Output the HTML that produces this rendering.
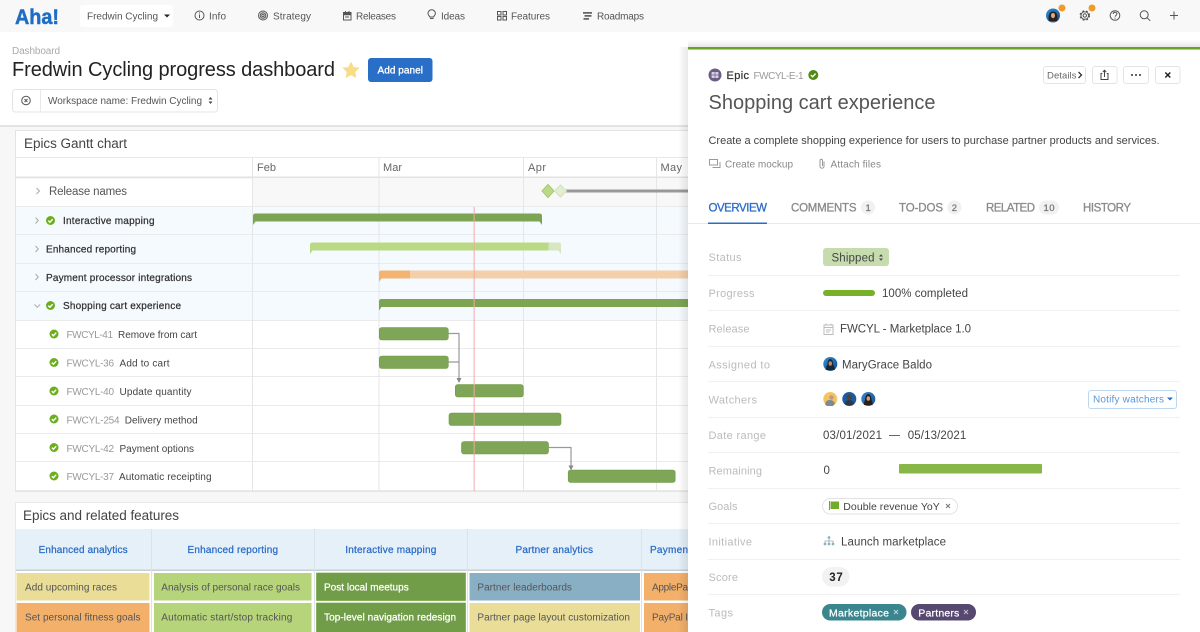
<!DOCTYPE html>
<html lang="en"><head><meta charset="utf-8"><title>Fredwin Cycling progress dashboard</title>
<style>
html,body{margin:0;padding:0;width:1200px;height:632px;overflow:hidden;background:#fff}
svg{display:block;filter:blur(.3px)}
text{font-family:"Liberation Sans",sans-serif}
.nav{font-size:10px;fill:#555}
.lab{font-size:11px;fill:#bbb}
.val{font-size:11.5px;fill:#444}
.bold{font-size:10px;fill:#333;stroke:#333;stroke-width:.25}
.id{font-size:10px;fill:#999}
.it{font-size:10px;fill:#444}
.mon{font-size:11px;fill:#666}
.tab{font-size:11.5px;fill:#8a8a8a;stroke:#8a8a8a;stroke-width:.3}
.hd{font-size:10px;fill:#2a6cc7;stroke:#2a6cc7;stroke-width:.25}
.card{font-size:10px;fill:#555}
.wt{font-size:10px;fill:#fff;stroke:#fff;stroke-width:.25}
.tag{font-size:10.5px;fill:#fff;stroke:#fff;stroke-width:.25}
.ic{fill:none;stroke:#555;stroke-width:1}
.sep{stroke:#f1f1f1;stroke-width:1}
.gl{stroke:#ebebeb;stroke-width:1}
.mg{stroke:#e4e6e8;stroke-width:1}
.ch{fill:none;stroke:#aaa;stroke-width:1}
.bar{fill:#7fa556;stroke:#6f9b45;stroke-width:.6}
.w{fill:none;stroke:#fff;stroke-width:1.4}
</style></head><body>
<svg width="1200" height="632" viewBox="0 0 1200 632" xmlns="http://www.w3.org/2000/svg">
<defs>
<linearGradient id="ps" x1="0" x2="1" y1="0" y2="0"><stop offset="0" stop-color="#000" stop-opacity="0"/><stop offset="1" stop-color="#000" stop-opacity=".09"/></linearGradient>
<linearGradient id="pt" x1="0" x2="0" y1="0" y2="1"><stop offset="0" stop-color="#000" stop-opacity="0"/><stop offset="1" stop-color="#000" stop-opacity=".1"/></linearGradient>
<linearGradient id="av" x1="0" x2="1" y1="0" y2="1"><stop offset="0" stop-color="#2f8bd6"/><stop offset="1" stop-color="#14508f"/></linearGradient>
<g id="ck"><circle r="4.5" fill="#6cae1d"/><path d="M-2.2 .1 L-.6 1.7 L2.2 -1.3" class="w"/></g>
</defs>

<!-- page backgrounds -->
<rect width="1200" height="632" fill="#f7f7f7"/>
<rect y="32" width="1200" height="93" fill="#fff"/>
<rect y="125" width="1200" height="2" fill="#e4e4e4"/>

<!-- nav -->
<rect width="1200" height="32" fill="#f8f8f8"/>
<text x="15" y="24" font-size="21" font-weight="bold" fill="#1f6dc4" stroke="#1f6dc4" stroke-width=".5" textLength="44" lengthAdjust="spacingAndGlyphs">Aha!</text>
<rect x="80" y="5" width="93" height="22" rx="3" fill="#fff"/>
<text x="87" y="19.5" class="nav" textLength="71">Fredwin Cycling</text>
<path d="M164 14.5h6l-3 3z" fill="#222"/>
<circle cx="199.500" cy="15.500" r="4.500" class="ic"/><path d="M199.500 14.500v3.500M199.500 12.500v1" class="ic"/>
<text x="209" y="19.500" class="nav" textLength="17">Info</text>
<circle cx="263" cy="15.500" r="4.500" class="ic"/><circle cx="263" cy="15.500" r="2.800" class="ic"/><circle cx="263" cy="15.500" r="1.200" class="ic"/>
<text x="273" y="19.500" class="nav" textLength="38">Strategy</text>
<path d="M343.500 12.500h7.500v7.500h-7.500zM343.500 14.800h7.500M345.500 11v2M349 11v2M345 17h4" class="ic"/><rect x="343.500" y="12" width="7.500" height="2.500" fill="#555"/>
<text x="356" y="19.500" class="nav" textLength="40">Releases</text>
<path d="M430 18.500h3.500M429.800 17c-.3-1.300-1.800-1.800-1.800-3.500a3.700 3.700 0 0 1 7.400 0c0 1.700-1.500 2.200-1.800 3.500z" class="ic"/>
<text x="441" y="19.500" class="nav" textLength="24">Ideas</text>
<path d="M497.500 11.500h3.500v3.500h-3.500zM503 11.500h3.500v3.500h-3.500zM497.500 16.500h3.500v3.500h-3.500zM503 16.500h3.500v3.500h-3.500z" class="ic"/>
<text x="511" y="19.500" class="nav" textLength="39">Features</text>
<path d="M583 12h9v1.800h-9zM584.500 15h7v1.800h-7zM583.500 18h5.500v1.800h-5.500z" fill="#666"/>
<text x="597" y="19.500" class="nav" textLength="47">Roadmaps</text>

<circle cx="1053" cy="15.500" r="7" fill="url(#av)"/><path d="M1048.800 21c-.6-4-.4-9.500 4.200-9.500s4.800 5.500 4.200 9.500z" fill="#2a211d"/><ellipse cx="1053" cy="15.500" rx="2" ry="2.600" fill="#d9a98a"/>
<circle cx="1062" cy="8" r="3.500" fill="#f09a28"/>
<circle cx="1084.800" cy="15.500" r="1.700" class="ic"/><circle cx="1084.800" cy="15.500" r="3.800" class="ic"/><circle cx="1084.800" cy="15.500" r="4.600" fill="none" stroke="#555" stroke-width="1.300" stroke-dasharray="1.800 2"/>
<circle cx="1092" cy="8" r="3.500" fill="#f09a28"/>
<circle cx="1115" cy="15.500" r="4.800" class="ic"/><path d="M1113.200 14c.2-2.300 3.700-2.200 3.700 0 0 1.400-1.800 1.300-1.800 2.700M1115 17.700v1" class="ic"/>
<circle cx="1144.200" cy="14.800" r="4" class="ic"/><path d="M1147.200 17.800l3 3" class="ic"/>
<path d="M1174 11.500v8M1170 15.500h8" class="ic"/>

<!-- dashboard header -->
<text x="12" y="54" font-size="10" fill="#aaa" textLength="48">Dashboard</text>
<text x="12" y="76" font-size="20" fill="#222" textLength="323">Fredwin Cycling progress dashboard</text>
<path d="M351 61.500l2.700 5.500 6 .8-4.400 4.200 1.100 6-5.400-2.900-5.400 2.900 1.100-6-4.400-4.200 6-.8z" fill="#f9dd86"/>
<rect x="368" y="58" width="64.500" height="24" rx="3" fill="#2a6fc7"/>
<text x="377.500" y="73.500" font-size="10" fill="#fff" stroke="#fff" stroke-width=".3" textLength="45.500">Add panel</text>
<rect x="12.500" y="89.500" width="205" height="22.500" rx="3" fill="#fff" stroke="#e4e4e4"/>
<path d="M40.500 90v22" stroke="#e8e8e8"/>
<circle cx="26" cy="100.500" r="4.300" class="ic"/><path d="M24.500 99l3 3M27.500 99l-3 3" class="ic"/>
<text x="48" y="104" class="nav" textLength="154">Workspace name: Fredwin Cycling</text>
<path d="M208.500 99.500l2-2.500 2 2.500zM208.500 101.500l2 2.500 2-2.500z" fill="#444"/>

<!-- Gantt panel -->
<rect x="15.500" y="130.500" width="680" height="361" fill="#fff" stroke="#e4e4e4"/>
<text x="24" y="148" font-size="13.5" fill="#444" textLength="103">Epics Gantt chart</text>
<path d="M16 157.500h672" stroke="#e8e8e8"/>
<rect x="16" y="176.500" width="672" height="1.800" fill="#e2e2e2"/>
<rect x="253" y="178" width="435" height="28" fill="#f8f8f8"/>
<rect x="16" y="207" width="672" height="113" fill="#f5faff"/>
<path class="gl" d="M16 206.500h672M16 234.500h672M16 263.500h672M16 291.500h672M16 320.500h672M16 348.500h672M16 376.500h672M16 405.500h672M16 433.500h672M16 461.500h672M16 490.500h672"/>
<path class="mg" d="M252.500 157v334M379 157v334M523.500 157v334M656.500 157v334"/>
<text x="257" y="171" class="mon" textLength="19">Feb</text>
<text x="383" y="171" class="mon" textLength="19">Mar</text>
<text x="528" y="171" class="mon" textLength="18">Apr</text>
<text x="660.500" y="171" class="mon" textLength="21.500">May</text>

<path class="ch" d="M36.500 188l3 3-3 3"/>
<text x="49" y="195" font-size="11.500" fill="#555" textLength="78">Release names</text>
<path class="ch" d="M35.500 217.500l2.800 3-2.800 3"/>
<use href="#ck" x="50.500" y="220.500"/>
<text x="63" y="224" class="bold" textLength="91.500">Interactive mapping</text>
<path class="ch" d="M35.500 246l2.800 3-2.800 3"/>
<text x="46" y="252.500" class="bold" textLength="90">Enhanced reporting</text>
<path class="ch" d="M35.500 274l2.800 3-2.800 3"/>
<text x="46" y="281" class="bold" textLength="146">Payment processor integrations</text>
<path class="ch" d="M34.500 304.500l2.800 2.800 2.800-2.800"/>
<use href="#ck" x="50.500" y="305.500"/>
<text x="63" y="309" class="bold" textLength="118">Shopping cart experience</text>

<use href="#ck" x="54" y="334"/><text x="66.500" y="338" class="id" textLength="46.500">FWCYL-41</text><text x="118" y="338" class="it" textLength="79">Remove from cart</text>
<use href="#ck" x="54" y="362.500"/><text x="66.500" y="366.500" class="id" textLength="47.500">FWCYL-36</text><text x="119.500" y="366.500" class="it" textLength="50">Add to cart</text>
<use href="#ck" x="54" y="391"/><text x="66.500" y="395" class="id" textLength="47.500">FWCYL-40</text><text x="119.500" y="395" class="it" textLength="72">Update quantity</text>
<use href="#ck" x="54" y="419"/><text x="66.500" y="423.500" class="id" textLength="53">FWCYL-254</text><text x="124.700" y="423.500" class="it" textLength="73">Delivery method</text>
<use href="#ck" x="54" y="447.500"/><text x="66.500" y="452" class="id" textLength="47.500">FWCYL-42</text><text x="119.500" y="452" class="it" textLength="74.500">Payment options</text>
<use href="#ck" x="54" y="476"/><text x="66.500" y="480" class="id" textLength="47.500">FWCYL-37</text><text x="119" y="480" class="it" textLength="92.500">Automatic receipting</text>

<!-- milestones -->
<path d="M566 191h122" stroke="#999" stroke-width="3"/>
<path d="M548 184.500l6 6.500-6 6.500-6-6.500z" fill="#bcd98b" stroke="#a5c96c"/>
<path d="M560.500 185l6 6-6 6-6-6z" fill="#e3edd3" stroke="#d3e2bd"/>

<!-- summary bars -->
<path d="M253 225v-9q0-2.500 2.500-2.500h284q2.500 0 2.500 2.500v9l-2.500-3.500h-284z" fill="#7da453"/>
<path d="M310 254v-9q0-2.500 2.500-2.500h246q2.500 0 2.500 2.500v9l-2.500-3.500h-246z" fill="#bad985"/>
<path d="M548.500 242.500h10q2.500 0 2.500 2.500v9l-2.500-3.500h-10z" fill="#d8e6c2"/>
<path d="M379 282v-9q0-2.500 2.500-2.500h306.500v8h-306.500z" fill="#f4cfa9"/>
<path d="M379 282v-9q0-2.500 2.500-2.500h28.500v8h-28.500z" fill="#f4b471"/>
<path d="M379 310.500v-9q0-2.500 2.500-2.500h306.500v8h-306.500z" fill="#7da453"/>
<!-- child bars -->
<rect class="bar" x="379.300" y="327.500" width="69" height="12.500" rx="2.500"/>
<rect class="bar" x="379.300" y="356" width="69" height="12.500" rx="2.500"/>
<rect class="bar" x="455.300" y="384.500" width="68" height="12.500" rx="2.500"/>
<rect class="bar" x="449" y="413" width="112" height="12.500" rx="2.500"/>
<rect class="bar" x="461.500" y="441.500" width="87" height="12.500" rx="2.500"/>
<rect class="bar" x="568.200" y="470" width="107" height="12.500" rx="2.500"/>
<!-- dependency -->
<path d="M448.500 333.500h10.500v45M448.500 362h10.500M548.500 447.500h22.500v19" fill="none" stroke="#999" stroke-width="1.200"/>
<path d="M456.500 378h5l-2.500 5zM568.500 465.500h5l-2.500 5z" fill="#888"/>
<!-- today -->
<rect x="473.500" y="207" width="1.400" height="284" fill="#f4a8a8" opacity=".7"/>

<!-- Features panel -->
<rect x="15.500" y="502.500" width="680" height="135" fill="#fff" stroke="#e8e8e8"/>
<text x="23" y="520" font-size="13.5" fill="#444" textLength="156">Epics and related features</text>
<rect x="16" y="529" width="672" height="41" fill="#e6f0f9"/>
<rect x="16" y="569.500" width="672" height="1.500" fill="#c9ced3"/>
<path d="M151.500 529v103M314.500 529v103M467.500 529v103M641.500 529v103" stroke="#dbe3ea"/>
<text x="38.600" y="553" class="hd" textLength="89">Enhanced analytics</text>
<text x="187.500" y="553" class="hd" textLength="90.500">Enhanced reporting</text>
<text x="345.300" y="553" class="hd" textLength="91">Interactive mapping</text>
<text x="515.500" y="553" class="hd" textLength="77.500">Partner analytics</text>
<text x="650" y="553" class="hd" textLength="38">Paymen</text>
<rect x="16.500" y="573" width="133" height="27.500" fill="#e9dd98"/>
<rect x="154" y="573" width="157.500" height="27.500" fill="#b6d57a"/>
<rect x="316.500" y="573" width="149" height="27.500" fill="#729d48" stroke="#64a030" stroke-width=".6"/>
<rect x="469.500" y="573" width="170.500" height="27.500" fill="#88afc4"/>
<rect x="644" y="573" width="44" height="27.500" fill="#f2b06b"/>
<rect x="16.500" y="603" width="133" height="29" fill="#f2b06b"/>
<rect x="154" y="603" width="157.500" height="29" fill="#b6d57a"/>
<rect x="316.500" y="603" width="149" height="29" fill="#729d48" stroke="#64a030" stroke-width=".6"/>
<rect x="469.500" y="603" width="170.500" height="29" fill="#e9dd98"/>
<rect x="644" y="603" width="44" height="29" fill="#f2b06b"/>
<text x="25" y="590.500" class="card" textLength="92">Add upcoming races</text>
<text x="25" y="620.500" class="card" textLength="115.500">Set personal fitness goals</text>
<text x="161.300" y="590.500" class="card" textLength="138.700">Analysis of personal race goals</text>
<text x="161.300" y="620.500" class="card" textLength="131">Automatic start/stop tracking</text>
<text x="324" y="590.500" class="wt" textLength="84.700">Post local meetups</text>
<text x="324" y="620.500" class="wt" textLength="132">Top-level navigation redesign</text>
<text x="477.400" y="590.500" class="card" textLength="94.500">Partner leaderboards</text>
<text x="477.400" y="620.500" class="card" textLength="152.500">Partner page layout customization</text>
<text x="652" y="590.500" class="card" textLength="36">ApplePa</text>
<text x="652" y="620.500" class="card" textLength="36">PayPal I</text>

<!-- Drawer -->
<rect x="678" y="47" width="10" height="585" fill="url(#ps)"/>
<rect x="688" y="40" width="512" height="7" fill="url(#pt)"/>
<rect x="688" y="47" width="512" height="585" fill="#fff"/>
<rect x="688" y="47" width="512" height="2.500" fill="#68a31f"/>

<circle cx="715" cy="75" r="6.500" fill="#6d5e88"/><rect x="711.500" y="72" width="7" height="6" rx="1" fill="#d9d3e3"/><path d="M715 72v6M711.500 75h7" stroke="#6d5e88" stroke-width=".7"/>
<text x="726.500" y="79" font-size="11" fill="#333" stroke="#333" stroke-width=".25" textLength="22.500">Epic</text>
<text x="753.500" y="79" class="id" textLength="50">FWCYL-E-1</text>
<circle cx="813.300" cy="75" r="5" fill="#4f8a12"/><path d="M810.800 75l1.800 1.800 3-3.200" class="w"/>
<rect x="1043.500" y="66.500" width="42" height="17" rx="2.500" fill="#fff" stroke="#e4e4e4"/>
<text x="1047" y="78.500" font-size="9.500" fill="#666" textLength="29.500">Details</text>
<path d="M1078.500 72l3 3-3 3" fill="none" stroke="#333" stroke-width="1.300"/>
<rect x="1092.500" y="66.500" width="24.500" height="17" rx="2.500" fill="#fff" stroke="#e4e4e4"/>
<path d="M1102.300 73.500h-1.300v6h7v-6h-1.300M1104.500 77v-6.500M1102.800 72l1.700-1.800 1.700 1.800" class="ic" style="stroke:#444"/>
<rect x="1123.500" y="66.500" width="25" height="17" rx="2.500" fill="#fff" stroke="#e4e4e4"/>
<circle cx="1132" cy="75" r="1" fill="#333"/><circle cx="1136" cy="75" r="1" fill="#333"/><circle cx="1140" cy="75" r="1" fill="#333"/>
<rect x="1155.500" y="66.500" width="24.500" height="17" rx="2.500" fill="#fff" stroke="#e4e4e4"/>
<path d="M1165.300 72.500l5 5M1170.300 72.500l-5 5" stroke="#222" stroke-width="1.500"/>

<text x="708.500" y="109" font-size="20" fill="#555" textLength="227">Shopping cart experience</text>
<text x="708.500" y="144" font-size="11" fill="#444" textLength="451">Create a complete shopping experience for users to purchase partner products and services.</text>
<path d="M709.500 159.500h8v5.500h-8zM712.500 167.500h7.500v-5.500" fill="none" stroke="#999"/>
<text x="725" y="167.500" font-size="10" fill="#888" textLength="68">Create mockup</text>
<path d="M824 161.500v4.700a2 2 0 0 1-4 0v-5.700a1.200 1.200 0 0 1 2.500 0v5.500" fill="none" stroke="#999"/>
<text x="830.500" y="167.500" font-size="10" fill="#888" textLength="50.500">Attach files</text>

<text x="708.500" y="211.500" class="tab" style="fill:#2a6cc7;stroke:#2a6cc7" textLength="58.500">OVERVIEW</text>
<text x="791" y="211.500" class="tab" textLength="65.500">COMMENTS</text>
<circle cx="868" cy="207.500" r="7" fill="#f1f1f1"/><text x="865.500" y="211" font-size="9.500" fill="#777" stroke="#777" stroke-width=".25">1</text>
<text x="899" y="211.500" class="tab" textLength="44">TO-DOS</text>
<circle cx="954.500" cy="207.500" r="7" fill="#f1f1f1"/><text x="951.800" y="211" font-size="9.500" fill="#777" stroke="#777" stroke-width=".25">2</text>
<text x="986" y="211.500" class="tab" textLength="49">RELATED</text>
<rect x="1039" y="200.500" width="20" height="14" rx="7" fill="#f1f1f1"/><text x="1043.500" y="211" font-size="9.500" fill="#777" stroke="#777" stroke-width=".25" textLength="11">10</text>
<text x="1083" y="211.500" class="tab" textLength="48">HISTORY</text>
<rect x="688" y="223" width="512" height="1" fill="#e8e8e8"/>
<rect x="708" y="222.500" width="59" height="1.500" fill="#2a6cc7"/>

<path class="sep" d="M708 275.500h472M708 310.500h472M708 346.500h472M708 381.500h472M708 417.500h472M708 452.500h472M708 488.500h472M708 523.500h472M708 559.500h472M708 594.500h472"/>
<text x="708.500" y="261" class="lab" textLength="33">Status</text>
<text x="708.500" y="297" class="lab" textLength="46">Progress</text>
<text x="708.500" y="332.500" class="lab" textLength="41">Release</text>
<text x="708.500" y="368.500" class="lab" textLength="61.500">Assigned to</text>
<text x="708.500" y="403.500" class="lab" textLength="48.500">Watchers</text>
<text x="708.500" y="439" class="lab" textLength="57.500">Date range</text>
<text x="708.500" y="474.500" class="lab" textLength="53.500">Remaining</text>
<text x="708.500" y="510" class="lab" textLength="29">Goals</text>
<text x="708.500" y="545.500" class="lab" textLength="43.500">Initiative</text>
<text x="708.500" y="581" class="lab" textLength="29.500">Score</text>
<text x="708.500" y="616.500" class="lab" textLength="24.500">Tags</text>

<rect x="823" y="248" width="66" height="18" rx="3" fill="#c6dcaf"/>
<text x="831.500" y="261.500" class="val" textLength="43">Shipped</text>
<path d="M879 256.500l2-2.300 2 2.300zM879 258.500l2 2.300 2-2.300z" fill="#444"/>

<rect x="823" y="290" width="52" height="6" rx="3" fill="#79b02a"/>
<text x="882" y="297" class="val" textLength="86">100% completed</text>

<path d="M824 325h9v9.500h-9zM824 327.500h9M826 323.500v2M831 323.500v2M826 330h5M826 332h3.500" fill="none" stroke="#bbb"/>
<text x="840" y="332.500" class="val" textLength="131">FWCYL - Marketplace 1.0</text>

<circle cx="830.300" cy="364" r="7" fill="url(#av)"/><path d="M825.800 370c.2-3 .5-3.800 1.500-5 .3-4 1.300-6 3-6s2.700 2 3 6c1 1.200 1.300 2 1.500 5z" fill="#1d2730"/><ellipse cx="830.300" cy="363.500" rx="1.700" ry="2.300" fill="#b98a72"/>
<text x="842" y="368.500" class="val" textLength="90">MaryGrace Baldo</text>

<circle cx="830.300" cy="399" r="7" fill="#f3c560"/><path d="M825 404.500c.5-3.500 2.500-4.500 5-4.500s4 1.500 5 3.500l-2 2.500h-6z" fill="#7d8a94"/><circle cx="831.500" cy="397.500" r="2.300" fill="#c29a7d"/>
<circle cx="849.300" cy="399" r="7" fill="#1c5ba0"/><circle cx="849.300" cy="397" r="2.800" fill="#4d4640"/><path d="M844.500 404c.8-3 2.500-4 4.800-4s4 1 4.800 4l-2 1.500h-5.500z" fill="#2c3a4a"/>
<circle cx="868.300" cy="399" r="7" fill="url(#av)"/><path d="M864 405c.2-3 .3-3.500 1-5 .3-4 1.600-6 3.300-6s3 2 3.300 6c.7 1.500.8 2 1 5z" fill="#2a1f1b"/><ellipse cx="868.300" cy="398.500" rx="1.700" ry="2.300" fill="#d0a084"/>
<rect x="1088.500" y="390.500" width="88" height="18" rx="2.500" fill="#fff" stroke="#bcd7f0"/>
<text x="1093" y="402.500" font-size="10" fill="#5a97d8" textLength="71">Notify watchers</text>
<path d="M1167 397.500h6l-3 3z" fill="#2a6cc7"/>

<text x="823" y="439" class="val" textLength="59">03/01/2021</text>
<path d="M889 435.500h11" stroke="#666"/>
<text x="907.800" y="439" class="val" textLength="58.500">05/13/2021</text>

<text x="823.500" y="474" class="val" textLength="6.500">0</text>
<rect x="899" y="464" width="143" height="9.500" rx="1" fill="#88b747"/>

<rect x="822.500" y="498.500" width="135" height="15.500" rx="7.700" fill="#fff" stroke="#e2e2e2"/>
<path d="M829.500 501v9" stroke="#6fa82a"/><path d="M830.500 501.500h8.500v7.500h-8.500z" fill="#71ab2b"/>
<text x="843.300" y="510" font-size="10.500" fill="#444" textLength="96.500">Double revenue YoY</text>
<path d="M946 504l4 4M950 504l-4 4" stroke="#777"/>

<circle cx="829" cy="537.500" r="1.400" fill="#8fb3bd"/><circle cx="825" cy="544" r="1.400" fill="#8fb3bd"/><circle cx="829" cy="544" r="1.400" fill="#8fb3bd"/><circle cx="833" cy="544" r="1.400" fill="#8fb3bd"/><path d="M829 538v6M825 543v-2h8v2" fill="none" stroke="#8fb3bd" stroke-width=".8"/>
<text x="841" y="545.500" class="val" textLength="105">Launch marketplace</text>

<rect x="822" y="567" width="27.500" height="19.500" rx="9.700" fill="#f2f2f2"/>
<text x="829.300" y="581" font-size="11.500" font-weight="bold" fill="#222" textLength="13.500">37</text>

<rect x="822" y="604" width="84.500" height="16.500" rx="8.200" fill="#3b868e"/>
<text x="829" y="616.500" class="tag" textLength="60">Marketplace</text>
<path d="M894 610l4 4M898 610l-4 4" stroke="#bcd8db"/>
<rect x="911" y="604" width="65" height="16.500" rx="8.200" fill="#56486f"/>
<text x="918.300" y="616.500" class="tag" textLength="41">Partners</text>
<path d="M964 610l4 4M968 610l-4 4" stroke="#c5bfd0"/>
</svg>
</body></html>
